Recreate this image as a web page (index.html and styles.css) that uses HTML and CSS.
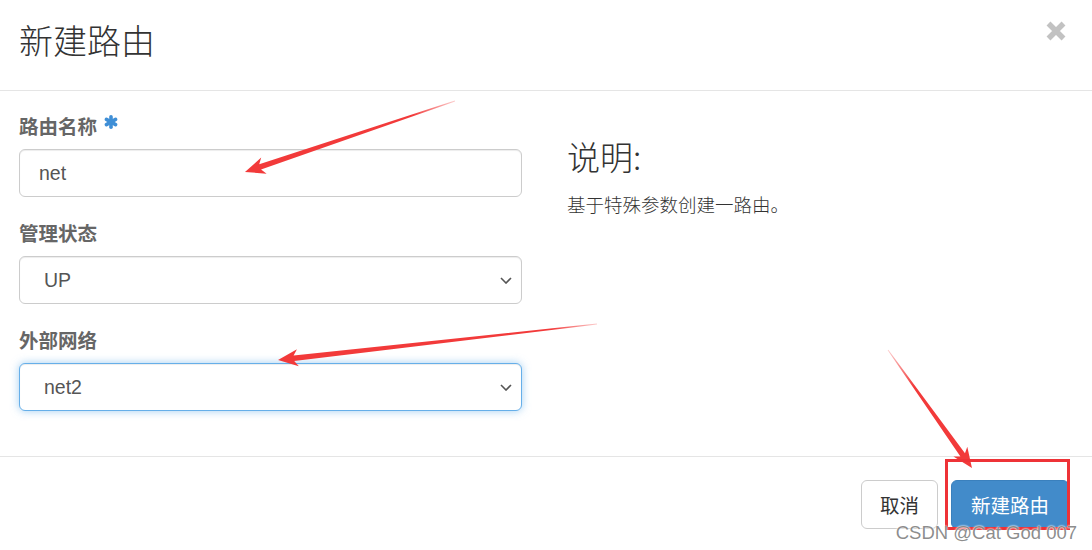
FILE: index.html
```html
<!DOCTYPE html>
<html lang="zh-CN">
<head>
<meta charset="utf-8">
<title>新建路由</title>
<link rel="stylesheet" href="styles.css">
</head>
<body>
<div class="modal">
  <div class="modal-header">
    <h3 class="modal-title">新建路由</h3>
    <button class="close" type="button" aria-label="关闭">
      <svg width="22" height="22" viewBox="0 0 22 22"><path d="M3.5 3.5 L18.5 18.5 M18.5 3.5 L3.5 18.5" stroke="#c2c2c2" stroke-width="5.5" stroke-linecap="butt"/></svg>
    </button>
  </div>
  <div class="modal-body">
    <div class="form-col">
      <div class="form-group">
        <label class="label">路由名称<svg class="req" width="16" height="14" viewBox="0 0 16 14"><g stroke="#3f8fd6" stroke-width="3.6" stroke-linecap="round"><path d="M8 1.8 V12.2"/><path d="M3.4 4.4 L12.6 9.6"/><path d="M12.6 4.4 L3.4 9.6"/></g></svg></label>
        <input class="control" type="text" value="net">
      </div>
      <div class="form-group">
        <label class="label">管理状态</label>
        <div class="select-wrap">
          <select class="control select"><option>UP</option></select>
          <svg class="chev" width="12" height="7" viewBox="0 0 12 7"><path d="M1 1 L6 6 L11 1" fill="none" stroke="#555" stroke-width="1.6"/></svg>
        </div>
      </div>
      <div class="form-group">
        <label class="label">外部网络</label>
        <div class="select-wrap">
          <select class="control select focus"><option>net2</option></select>
          <svg class="chev" width="12" height="7" viewBox="0 0 12 7"><path d="M1 1 L6 6 L11 1" fill="none" stroke="#555" stroke-width="1.6"/></svg>
        </div>
      </div>
    </div>
    <div class="help-col">
      <h3 class="help-title">说明:</h3>
      <p class="help-text">基于特殊参数创建一路由。</p>
    </div>
  </div>
  <div class="modal-footer">
    <button class="btn" type="button">取消</button>
    <button class="btn btn-primary" type="button">新建路由</button>
  </div>

  <svg class="annot" width="1092" height="550" viewBox="0 0 1092 550">
    <defs>
      <linearGradient id="fade" gradientUnits="userSpaceOnUse" x1="0" y1="0" x2="45" y2="0">
        <stop offset="0" stop-color="#f23a3a" stop-opacity="0.25"/>
        <stop offset="1" stop-color="#f23a3a" stop-opacity="1"/>
      </linearGradient>
    </defs>
    <path transform="translate(455 101) rotate(161.32)" fill="url(#fade)" d="M0,-0.4 L205.7,-2.8 L201.7,-8.5 L221.7,0 L201.7,8.5 L205.7,2.8 L0,0.4Z"/>
    <path transform="translate(597 324) rotate(173.56)" fill="url(#fade)" d="M0,-0.4 L305,-2.8 L301,-8.5 L321,0 L301,8.5 L305,2.8 L0,0.4Z"/>
    <path transform="translate(888 350) rotate(54.56)" fill="url(#fade)" d="M0,-0.4 L128.8,-2.8 L124.8,-8.5 L144.8,0 L124.8,8.5 L128.8,2.8 L0,0.4Z"/>
    <rect x="946.5" y="460.5" width="122" height="68" fill="none" stroke="#ee3237" stroke-width="3"/>
  </svg>
  <div class="watermark">CSDN @Cat God 007</div>
</div>
</body>
</html>
```

FILE: styles.css
```css
* { box-sizing: border-box; }

html, body {
  margin: 0;
  padding: 0;
  background: #fff;
}

body {
  font-family: "Liberation Sans", "Noto Sans CJK SC", sans-serif;
  color: #333;
}

.modal {
  position: relative;
  width: 1092px;
  height: 550px;
  overflow: hidden;
  background: #fff;
}

.modal-header {
  display: flex;
  justify-content: space-between;
  align-items: flex-start;
  height: 91px;
  padding: 0 25px 0 19px;
  border-bottom: 1px solid #e5e5e5;
}

.modal-title {
  margin: 20px 0 0;
  font-family: "Noto Sans CJK SC", sans-serif;
  font-weight: 300;
  font-size: 34px;
  line-height: 40px;
  color: #333;
}

.close {
  margin-top: 20px;
  padding: 0;
  border: 0;
  background: none;
  line-height: 0;
}

.modal-body {
  display: flex;
  padding: 22px 0 45px 19px;
}

.form-col {
  width: 503px;
  display: flex;
  flex-direction: column;
  gap: 23px;
}

.form-group {
  display: flex;
  flex-direction: column;
}

.label {
  display: flex;
  align-items: center;
  gap: 6px;
  height: 28px;
  padding-bottom: 4px;
  margin-bottom: 8px;
  font-family: "Noto Sans CJK SC", sans-serif;
  font-weight: 700;
  font-size: 19.5px;
  color: #666;
}

.req { margin-top: -6px; }

.control {
  display: block;
  width: 100%;
  height: 48px;
  padding: 0 19px;
  border: 1px solid #ccc;
  border-radius: 6px;
  background: #fff;
  font-family: "Liberation Sans", "Noto Sans CJK SC", sans-serif;
  font-size: 19.5px;
  color: #555;
  box-shadow: inset 0 1px 1px rgba(0,0,0,0.075);
  outline: none;
}

.select-wrap { position: relative; }

.select {
  appearance: none;
  -webkit-appearance: none;
  padding-left: 24px;
}

.select.focus {
  border-color: #66afe9;
  box-shadow: inset 0 1px 1px rgba(0,0,0,0.075), 0 0 8px rgba(102,175,233,0.6);
}

.chev {
  position: absolute;
  right: 10px;
  top: 21px;
}

.help-col {
  margin-left: 45px;
}

.help-title {
  margin: 23px 0 0;
  font-family: "Noto Sans CJK SC", sans-serif;
  font-weight: 300;
  font-size: 33px;
  line-height: 40px;
  color: #333;
}

.help-text {
  margin: 15px 0 0;
  font-family: "Noto Sans CJK SC", sans-serif;
  font-weight: 300;
  font-size: 18.5px;
  line-height: 26px;
  color: #333;
}

.modal-footer {
  display: flex;
  justify-content: flex-end;
  gap: 13px;
  padding: 23px 23px 0;
  border-top: 1px solid #e5e5e5;
}

.btn {
  height: 49px;
  padding: 0 18px;
  border: 1px solid #ccc;
  border-radius: 6px;
  background: #fff;
  font-family: "Noto Sans CJK SC", sans-serif;
  font-size: 19.5px;
  color: #333;
}

.btn-primary {
  padding: 0 19px;
  background: #428bca;
  border-color: #3a80bd;
  color: #fff;
}

.annot {
  position: absolute;
  left: 0;
  top: 0;
  pointer-events: none;
}

.watermark {
  position: absolute;
  right: 15px;
  bottom: 6px;
  font-family: "Liberation Sans", sans-serif;
  font-size: 18.5px;
  line-height: 22px;
  color: rgba(120,120,120,0.85);
  text-shadow: 0 0 2px #fff, 0 0 2px #fff;
  pointer-events: none;
}
```
